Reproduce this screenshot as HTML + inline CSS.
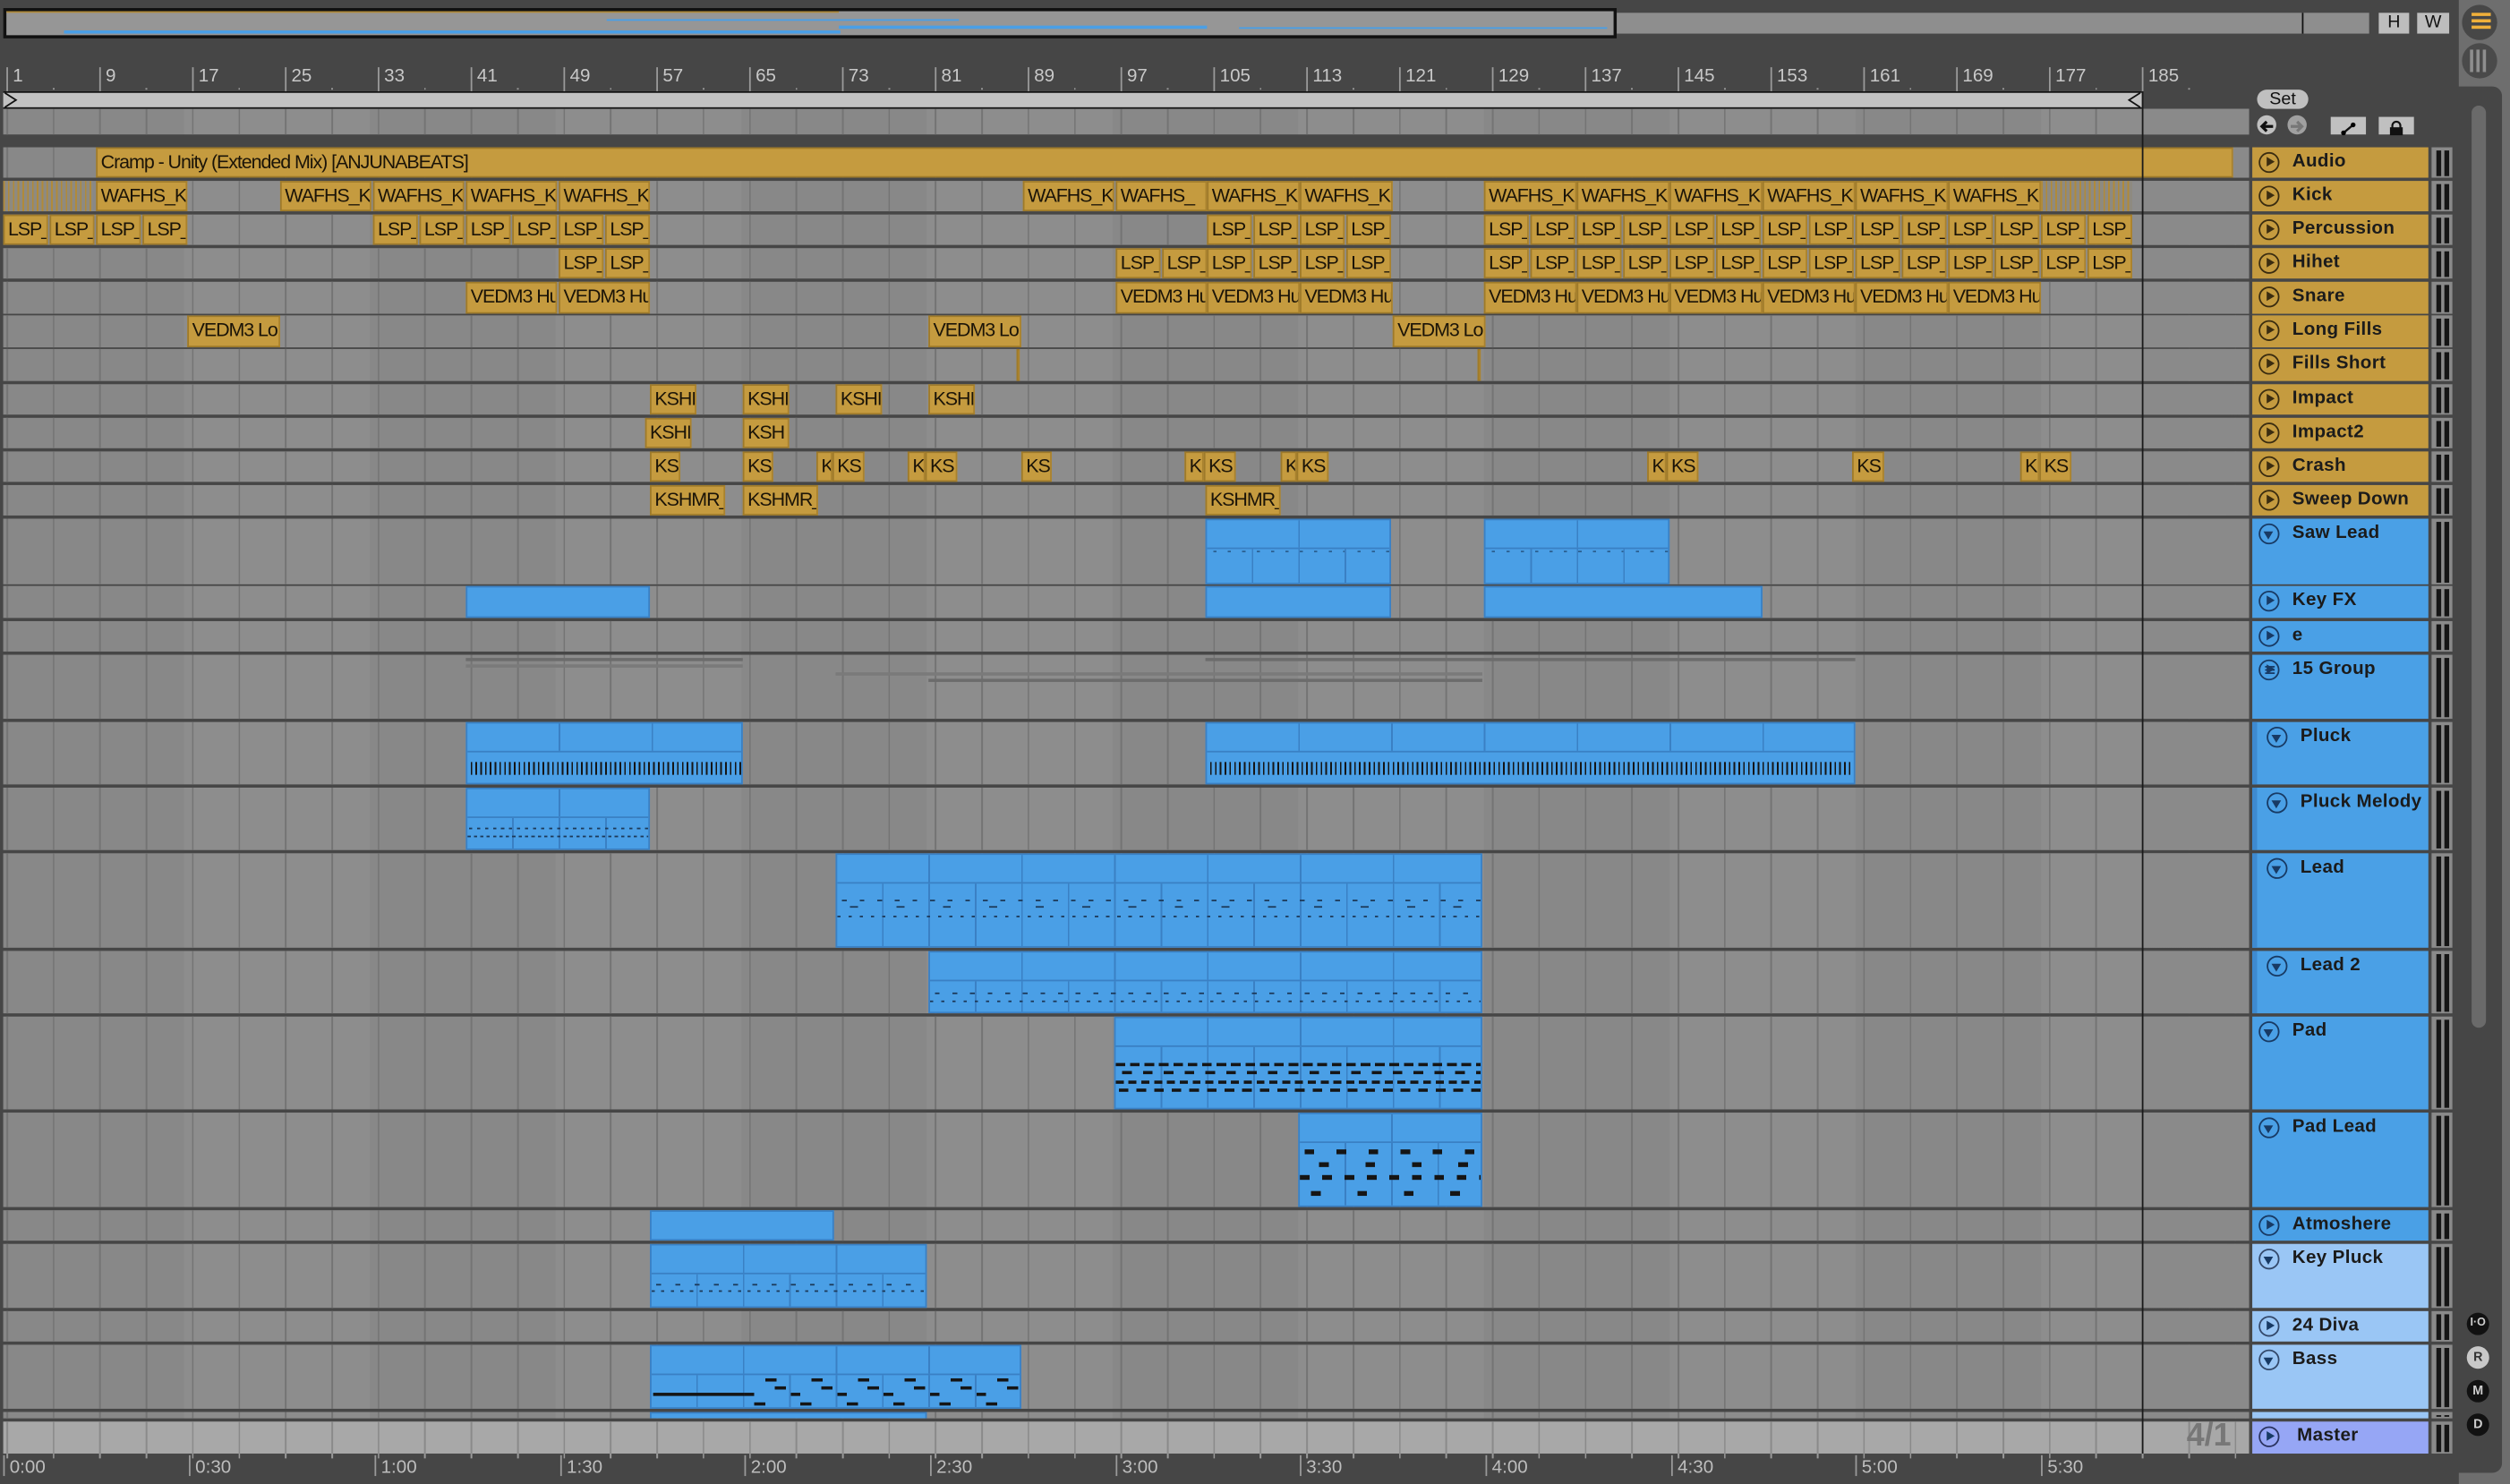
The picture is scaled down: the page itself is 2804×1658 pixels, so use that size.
<!DOCTYPE html>
<html><head><meta charset="utf-8">
<style>
*{margin:0;padding:0;box-sizing:border-box}
html,body{width:2804px;height:1658px;overflow:hidden;background:#464646}
#s{position:absolute;left:0;top:0;width:1568px;height:927px;transform:scale(1.78827,1.78857);transform-origin:0 0;font-family:"Liberation Sans",sans-serif;background:#464646}
.a{position:absolute}
.row{position:absolute;left:2px;width:1403px;background:
 linear-gradient(90deg,transparent 0 1336px,#8a8a8a 1336px),
 repeating-linear-gradient(90deg,#747474 0 1px,transparent 1px 29px),
 repeating-linear-gradient(90deg,#888 0 116px,#8d8d8d 116px 232px);
 background-position:0 0,2px 0,-3px 0;overflow:hidden}
.g{position:absolute;top:0;bottom:0;background:#c59b3f;border:1px solid #9e7a2a;border-right-color:#a9822e;color:#1b1408;font-family:"Liberation Sans Narrow","Liberation Sans",sans-serif;font-size:12px;line-height:17px;padding-left:2px;white-space:nowrap;overflow:hidden;letter-spacing:-.6px}
.h{position:absolute;top:0;bottom:0;background:repeating-linear-gradient(90deg,#b08a3a 0 1px,#8e8a80 1px 3px)}
.b{position:absolute;top:0;bottom:0;background:#4a9fe6;border:1px solid #3a80c4;overflow:hidden}
.b .hd{position:absolute;left:0;right:0;top:0;border-bottom:1px solid #3a80c4;background:repeating-linear-gradient(90deg,transparent 0 57px,#3a80c4 57px 58px)}
.b .bd{position:absolute;left:0;right:0;bottom:0;background:repeating-linear-gradient(90deg,transparent 0 28px,#3a80c4 28px 29px)}
.th{position:absolute;left:1407px;width:110px;font-weight:bold;font-size:11.5px;color:#1b1b1b;overflow:hidden}
.th .ic{position:absolute;left:4px;top:3px;width:13px;height:13px;border:1.3px solid #3a2c10;border-radius:50%}
.th .ic:after{content:"";position:absolute;left:3.6px;top:2.2px;border-left:5px solid #3a2c10;border-top:3.3px solid transparent;border-bottom:3.3px solid transparent}
.th.bl .ic{border-color:#183a64}.th.bl .ic:after{border-left-color:#183a64}
.th .ic.d:after{left:2.2px;top:3.8px;border-top:5px solid #183a64;border-left:3.3px solid transparent;border-right:3.3px solid transparent;border-bottom:0}
.th span{position:absolute;left:25px;top:3px;white-space:nowrap;letter-spacing:.2px}
.th.in .ic{left:9px}.th.in span{left:30px}
.th.in{box-shadow:inset 3px 0 0 #3e8ad0}
.gd{background:#c59b3f}.bl{background:#4aa0e6}.lb{background:#9ac6f5}
.m{position:absolute;left:1519px;width:13px;background:#8a8a8a}
.m:before,.m:after{content:"";position:absolute;top:2px;bottom:1px;width:3.5px;background:#151515}
.m:before{left:2.5px}.m:after{left:7.5px}
.rn{position:absolute;top:42px;font-size:11.5px;color:#c8c8c8;border-left:1px solid #9a9a9a;padding-left:3px;height:15px;line-height:12px}
.tl{position:absolute;top:909px;font-size:11.5px;color:#bdbdbd;border-left:1px solid #9a9a9a;padding-left:3px;height:13px;line-height:16px}
</style></head><body><div id="s">

<!-- overview -->
<div class="a" style="left:2px;top:5px;width:1008px;height:19px;border:2px solid #111;background:#969696">
 <div class="a" style="left:0;top:0;width:520px;height:1px;background:#b08a3a"></div>
 <div class="a" style="left:36px;top:12px;width:485px;height:2px;background:#4a9fe6"></div>
 <div class="a" style="left:375px;top:5px;width:220px;height:1px;background:#4a9fe6"></div>
 <div class="a" style="left:520px;top:9px;width:230px;height:2px;background:#4a9fe6"></div>
 <div class="a" style="left:770px;top:10px;width:230px;height:1px;background:#4a9fe6"></div>
</div>
<div class="a" style="left:1010px;top:8px;width:470px;height:13px;background:#8e8e8e"></div>
<div class="a" style="left:1438px;top:8px;width:1px;height:13px;background:#111"></div>
<div class="a" style="left:1486px;top:8px;width:19px;height:13px;background:#bdbdbd;font-size:11px;text-align:center;line-height:13px;color:#111">H</div>
<div class="a" style="left:1510px;top:8px;width:20px;height:13px;background:#bdbdbd;font-size:11px;text-align:center;line-height:13px;color:#111">W</div>

<!-- right strip -->
<div class="a" style="left:1536px;top:0;width:32px;height:927px;background:#6e6e6e"></div>
<div class="a" style="left:1538px;top:3px;width:22px;height:22px;border-radius:50%;background:#474747"></div>
<div class="a" style="left:1544px;top:8px;width:12px;height:2px;background:#f0b03a;box-shadow:0 4px 0 #f0b03a,0 8px 0 #f0b03a"></div>
<div class="a" style="left:1538px;top:27px;width:22px;height:22px;border-radius:50%;background:#4a4a4a"></div>
<div class="a" style="left:1543px;top:31px;width:2px;height:14px;background:#8e8e8e;box-shadow:4px 0 0 #8e8e8e,8px 0 0 #8e8e8e"></div>
<div class="a" style="left:1530px;top:54px;width:33px;height:866px;background:#464646;border-radius:0 6px 6px 0"></div>
<div class="a" style="left:1544px;top:66px;width:9px;height:576px;background:#6a6a6a;border-radius:5px"></div>
<div class="a" style="left:1541px;top:820px;width:14px;height:14px;border-radius:50%;background:#111;color:#ccc;font-size:7px;font-weight:bold;text-align:center;line-height:14px">I·O</div>
<div class="a" style="left:1541px;top:841px;width:14px;height:14px;border-radius:50%;background:#c8c8c8;color:#333;font-size:8px;font-weight:bold;text-align:center;line-height:14px">R</div>
<div class="a" style="left:1541px;top:862px;width:14px;height:14px;border-radius:50%;background:#111;color:#ccc;font-size:8px;font-weight:bold;text-align:center;line-height:14px">M</div>
<div class="a" style="left:1541px;top:883px;width:14px;height:14px;border-radius:50%;background:#111;color:#ccc;font-size:8px;font-weight:bold;text-align:center;line-height:14px">D</div>

<!-- ruler -->
<div class="rn" style="left:4px">1</div><div class="rn" style="left:62px">9</div><div class="rn" style="left:120px">17</div><div class="rn" style="left:178px">25</div><div class="rn" style="left:236px">33</div><div class="rn" style="left:294px">41</div><div class="rn" style="left:352px">49</div><div class="rn" style="left:410px">57</div><div class="rn" style="left:468px">65</div><div class="rn" style="left:526px">73</div><div class="rn" style="left:584px">81</div><div class="rn" style="left:642px">89</div><div class="rn" style="left:700px">97</div><div class="rn" style="left:758px">105</div><div class="rn" style="left:816px">113</div><div class="rn" style="left:874px">121</div><div class="rn" style="left:932px">129</div><div class="rn" style="left:990px">137</div><div class="rn" style="left:1048px">145</div><div class="rn" style="left:1106px">153</div><div class="rn" style="left:1164px">161</div><div class="rn" style="left:1222px">169</div><div class="rn" style="left:1280px">177</div><div class="rn" style="left:1338px">185</div>
<div class="a" style="left:33px;top:55px;width:1340px;height:1px;background:repeating-linear-gradient(90deg,#9a9a9a 0 1px,transparent 1px 58px)"></div>

<!-- loop bar -->
<div class="a" style="left:2px;top:57px;width:1336px;height:11px;background:#c2c2c2;border-top:1px solid #111;border-bottom:1px solid #111"></div>
<svg class="a" style="left:2px;top:57px" width="10" height="11"><path d="M1 1 L8 5.5 L1 10" fill="none" stroke="#111" stroke-width="1"/></svg>
<svg class="a" style="left:1328px;top:57px" width="10" height="11"><path d="M9 1 L2 5.5 L9 10" fill="none" stroke="#111" stroke-width="1"/></svg>
<div class="row" style="top:68px;height:16px"></div>

<!-- tracks -->
<div class="row" style="top:92px;height:19px"><div class="g" style="left:58px;width:1335px">Cramp - Unity (Extended Mix) [ANJUNABEATS]</div></div>
<div class="row" style="top:113px;height:19px">
<div class="h" style="left:0;width:56px"></div>
<div class="g" style="left:58px;width:57px">WAFHS_K</div><div class="g" style="left:173px;width:57px">WAFHS_K</div><div class="g" style="left:231px;width:57px">WAFHS_K</div><div class="g" style="left:289px;width:57px">WAFHS_K</div><div class="g" style="left:347px;width:57px">WAFHS_K</div><div class="g" style="left:637px;width:57px">WAFHS_K</div><div class="g" style="left:695px;width:57px">WAFHS_</div><div class="g" style="left:752px;width:58px">WAFHS_K</div><div class="g" style="left:810px;width:58px">WAFHS_K</div><div class="g" style="left:925px;width:58px">WAFHS_K</div><div class="g" style="left:983px;width:58px">WAFHS_K</div><div class="g" style="left:1041px;width:58px">WAFHS_K</div><div class="g" style="left:1099px;width:58px">WAFHS_K</div><div class="g" style="left:1157px;width:58px">WAFHS_K</div><div class="g" style="left:1215px;width:58px">WAFHS_K</div>
<div class="h" style="left:1273px;width:57px"></div></div>
<div class="row" style="top:134px;height:19px">
<div class="g" style="left:0;width:28px">LSP_</div><div class="g" style="left:29px;width:28px">LSP_</div><div class="g" style="left:58px;width:28px">LSP_</div><div class="g" style="left:87px;width:28px">LSP_</div>
<div class="g" style="left:231px;width:28px">LSP_</div><div class="g" style="left:260px;width:28px">LSP_</div><div class="g" style="left:289px;width:28px">LSP_</div><div class="g" style="left:318px;width:28px">LSP_</div><div class="g" style="left:347px;width:28px">LSP_</div><div class="g" style="left:376px;width:28px">LSP_</div>
<div class="g" style="left:752px;width:28px">LSP_</div><div class="g" style="left:781px;width:28px">LSP_</div><div class="g" style="left:810px;width:28px">LSP_</div><div class="g" style="left:839px;width:28px">LSP_</div>
<div class="g" style="left:925px;width:28px">LSP_</div><div class="g" style="left:954px;width:28px">LSP_</div><div class="g" style="left:983px;width:28px">LSP_</div><div class="g" style="left:1012px;width:28px">LSP_</div><div class="g" style="left:1041px;width:28px">LSP_</div><div class="g" style="left:1070px;width:28px">LSP_</div><div class="g" style="left:1099px;width:28px">LSP_</div><div class="g" style="left:1128px;width:28px">LSP_</div><div class="g" style="left:1157px;width:28px">LSP_</div><div class="g" style="left:1186px;width:28px">LSP_</div><div class="g" style="left:1215px;width:28px">LSP_</div><div class="g" style="left:1244px;width:28px">LSP_</div><div class="g" style="left:1273px;width:28px">LSP_</div><div class="g" style="left:1302px;width:28px">LSP_</div></div>
<div class="row" style="top:155px;height:19px">
<div class="g" style="left:347px;width:28px">LSP_</div><div class="g" style="left:376px;width:28px">LSP_</div>
<div class="g" style="left:695px;width:28px">LSP_</div><div class="g" style="left:724px;width:28px">LSP_</div><div class="g" style="left:752px;width:28px">LSP_</div><div class="g" style="left:781px;width:28px">LSP_</div><div class="g" style="left:810px;width:28px">LSP_</div><div class="g" style="left:839px;width:28px">LSP_</div>
<div class="g" style="left:925px;width:28px">LSP_</div><div class="g" style="left:954px;width:28px">LSP_</div><div class="g" style="left:983px;width:28px">LSP_</div><div class="g" style="left:1012px;width:28px">LSP_</div><div class="g" style="left:1041px;width:28px">LSP_</div><div class="g" style="left:1070px;width:28px">LSP_</div><div class="g" style="left:1099px;width:28px">LSP_</div><div class="g" style="left:1128px;width:28px">LSP_</div><div class="g" style="left:1157px;width:28px">LSP_</div><div class="g" style="left:1186px;width:28px">LSP_</div><div class="g" style="left:1215px;width:28px">LSP_</div><div class="g" style="left:1244px;width:28px">LSP_</div><div class="g" style="left:1273px;width:28px">LSP_</div><div class="g" style="left:1302px;width:28px">LSP_</div></div>
<div class="row" style="top:176px;height:20px">
<div class="g" style="left:289px;width:57px">VEDM3 Hu</div><div class="g" style="left:347px;width:57px">VEDM3 Hu</div><div class="g" style="left:695px;width:57px">VEDM3 Hu</div><div class="g" style="left:752px;width:58px">VEDM3 Hu</div><div class="g" style="left:810px;width:58px">VEDM3 Hu</div><div class="g" style="left:925px;width:58px">VEDM3 Hu</div><div class="g" style="left:983px;width:58px">VEDM3 Hu</div><div class="g" style="left:1041px;width:58px">VEDM3 Hu</div><div class="g" style="left:1099px;width:58px">VEDM3 Hu</div><div class="g" style="left:1157px;width:58px">VEDM3 Hu</div><div class="g" style="left:1215px;width:58px">VEDM3 Hu</div></div>
<div class="row" style="top:197px;height:20px">
<div class="g" style="left:115px;width:58px">VEDM3 Lo</div><div class="g" style="left:578px;width:58px">VEDM3 Lo</div><div class="g" style="left:868px;width:58px">VEDM3 Lo</div></div>
<div class="row" style="top:218px;height:20px"><div class="g" style="left:633px;width:2px;padding:0"></div><div class="g" style="left:921px;width:2px;padding:0"></div></div>
<div class="row" style="top:240px;height:19px">
<div class="g" style="left:404px;width:29px">KSHI</div><div class="g" style="left:462px;width:29px">KSHI</div><div class="g" style="left:520px;width:29px">KSHI</div><div class="g" style="left:578px;width:29px">KSHI</div></div>
<div class="row" style="top:261px;height:19px">
<div class="g" style="left:401px;width:29px">KSHI</div><div class="g" style="left:462px;width:29px">KSH</div></div>
<div class="row" style="top:282px;height:19px">
<div class="g" style="left:404px;width:19px">KS</div><div class="g" style="left:462px;width:19px">KS</div><div class="g" style="left:508px;width:10px">K</div><div class="g" style="left:518px;width:20px">KS</div><div class="g" style="left:565px;width:11px">K</div><div class="g" style="left:576px;width:20px">KS</div><div class="g" style="left:636px;width:19px">KS</div><div class="g" style="left:738px;width:12px">K</div><div class="g" style="left:750px;width:20px">KS</div><div class="g" style="left:798px;width:10px">K</div><div class="g" style="left:808px;width:20px">KS</div><div class="g" style="left:1027px;width:12px">K</div><div class="g" style="left:1039px;width:20px">KS</div><div class="g" style="left:1155px;width:20px">KS</div><div class="g" style="left:1260px;width:12px">K</div><div class="g" style="left:1272px;width:20px">KS</div></div>
<div class="row" style="top:303px;height:19px">
<div class="g" style="left:404px;width:47px">KSHMR_</div><div class="g" style="left:462px;width:47px">KSHMR_</div><div class="g" style="left:751px;width:47px">KSHMR_</div></div>

<!-- Saw Lead -->
<div class="row" style="top:324px;height:41px">
<div class="b" style="left:751px;width:116px"><div class="hd" style="height:18px"></div><div class="bd" style="top:18px;background:repeating-linear-gradient(90deg,transparent 0 28px,#3a80c4 28px 29px),repeating-linear-gradient(90deg,transparent 0 4px,#2b5f90 4px 6px,transparent 6px 9px) 0 1px/100% 1px no-repeat"></div></div>
<div class="b" style="left:925px;width:116px"><div class="hd" style="height:18px"></div><div class="bd" style="top:18px;background:repeating-linear-gradient(90deg,transparent 0 28px,#3a80c4 28px 29px),repeating-linear-gradient(90deg,transparent 0 4px,#2b5f90 4px 6px,transparent 6px 9px) 0 1px/100% 1px no-repeat"></div></div></div>
<div class="row" style="top:366px;height:20px">
<div class="b" style="left:289px;width:115px"></div><div class="b" style="left:751px;width:116px"></div><div class="b" style="left:925px;width:174px"></div></div>
<div class="row" style="top:388px;height:19px"></div>
<div class="row" style="top:409px;height:40px">
<div class="a" style="left:289px;top:2px;width:173px;height:2px;background:#6c6c6c"></div><div class="a" style="left:289px;top:6px;width:173px;height:2px;background:#7a7a7a"></div>
<div class="a" style="left:751px;top:2px;width:406px;height:2px;background:#6c6c6c"></div>
<div class="a" style="left:520px;top:11px;width:404px;height:2px;background:#7a7a7a"></div><div class="a" style="left:578px;top:15px;width:346px;height:2px;background:#6c6c6c"></div></div>
<div class="row" style="top:451px;height:39px">
<div class="b" style="left:289px;width:173px"><div class="hd" style="height:18px"></div><div class="bd" style="top:18px;background:repeating-linear-gradient(90deg,#151515 0 1px,transparent 1px 3px) 2px 6px/100% 8px no-repeat"></div></div>
<div class="b" style="left:751px;width:406px"><div class="hd" style="height:18px"></div><div class="bd" style="top:18px;background:repeating-linear-gradient(90deg,#151515 0 1px,transparent 1px 3px) 2px 6px/100% 8px no-repeat"></div></div></div>
<div class="row" style="top:492px;height:39px">
<div class="b" style="left:289px;width:115px"><div class="hd" style="height:18px"></div><div class="bd" style="top:18px;background:repeating-linear-gradient(90deg,transparent 0 1px,#1d3a5a 1px 3px,transparent 3px 5px) 0 6px/100% 1px no-repeat,repeating-linear-gradient(90deg,#1d3a5a 0 2px,transparent 2px 4px) 0 11px/100% 1px no-repeat,repeating-linear-gradient(90deg,transparent 0 28px,#3a80c4 28px 29px)"></div></div></div>
<!-- Lead -->
<div class="row" style="top:533px;height:59px">
<div class="b" style="left:520px;width:404px"><div class="hd" style="height:18px"></div><div class="bd" style="top:18px;background:repeating-linear-gradient(90deg,transparent 0 3px,#1d3a5a 3px 6px,transparent 6px 11px) 0 10px/100% 1px no-repeat,repeating-linear-gradient(90deg,transparent 0 8px,#1d3a5a 8px 13px,transparent 13px 29px) 0 14px/100% 1px no-repeat,repeating-linear-gradient(90deg,#1d3a5a 0 2px,transparent 2px 7px) 0 20px/100% 1px no-repeat,repeating-linear-gradient(90deg,transparent 0 28px,#3a80c4 28px 29px)"></div></div></div>
<div class="row" style="top:594px;height:39px">
<div class="b" style="left:578px;width:346px"><div class="hd" style="height:18px"></div><div class="bd" style="top:18px;background:repeating-linear-gradient(90deg,transparent 0 3px,#1d3a5a 3px 6px,transparent 6px 11px) 0 7px/100% 1px no-repeat,repeating-linear-gradient(90deg,#1d3a5a 0 2px,transparent 2px 7px) 0 12px/100% 1px no-repeat,repeating-linear-gradient(90deg,transparent 0 28px,#3a80c4 28px 29px)"></div></div></div>
<div class="row" style="top:635px;height:58px">
<div class="b" style="left:694px;width:230px"><div class="hd" style="height:18px"></div><div class="bd" style="top:18px;background:repeating-linear-gradient(90deg,#151515 0 6px,transparent 6px 9px) 0 10px/100% 2px no-repeat,repeating-linear-gradient(90deg,transparent 0 4px,#151515 4px 10px,transparent 10px 13px) 0 15px/100% 2px no-repeat,repeating-linear-gradient(90deg,#151515 0 5px,transparent 5px 8px) 0 21px/100% 2px no-repeat,repeating-linear-gradient(90deg,transparent 0 2px,#151515 2px 8px,transparent 8px 11px) 0 26px/100% 2px no-repeat,repeating-linear-gradient(90deg,transparent 0 28px,#3a80c4 28px 29px)"></div></div></div>
<div class="row" style="top:695px;height:59px">
<div class="b" style="left:809px;width:115px"><div class="hd" style="height:18px"></div><div class="bd" style="top:18px;background:repeating-linear-gradient(90deg,transparent 0 3px,#151515 3px 9px,transparent 9px 20px) 0 4px/100% 3px no-repeat,repeating-linear-gradient(90deg,transparent 0 12px,#151515 12px 18px,transparent 18px 29px) 0 12px/100% 3px no-repeat,repeating-linear-gradient(90deg,#151515 0 6px,transparent 6px 14px) 0 20px/100% 3px no-repeat,repeating-linear-gradient(90deg,transparent 0 7px,#151515 7px 13px,transparent 13px 29px) 0 30px/100% 3px no-repeat,repeating-linear-gradient(90deg,transparent 0 28px,#3a80c4 28px 29px)"></div></div></div>
<div class="row" style="top:756px;height:19px"><div class="b" style="left:404px;width:115px"></div></div>
<div class="row" style="top:777px;height:40px">
<div class="b" style="left:404px;width:173px"><div class="hd" style="height:18px"></div><div class="bd" style="top:18px;background:repeating-linear-gradient(90deg,transparent 0 3px,#1d3a5a 3px 6px,transparent 6px 12px) 0 6px/100% 1px no-repeat,repeating-linear-gradient(90deg,#1d3a5a 0 2px,transparent 2px 6px) 0 10px/100% 1px no-repeat,repeating-linear-gradient(90deg,transparent 0 28px,#3a80c4 28px 29px)"></div></div></div>
<div class="row" style="top:819px;height:19px"></div>
<div class="row" style="top:840px;height:40px">
<div class="b" style="left:404px;width:232px"><div class="hd" style="height:18px"></div><div class="bd" style="top:18px;background:linear-gradient(#151515,#151515) 1px 11px/57px 2px no-repeat,repeating-linear-gradient(90deg,transparent 0 13px,#151515 13px 20px,transparent 20px 29px) 58px 2px/100% 2px no-repeat,repeating-linear-gradient(90deg,transparent 0 19px,#151515 19px 26px,transparent 26px 29px) 58px 7px/100% 2px no-repeat,repeating-linear-gradient(90deg,#151515 0 6px,transparent 6px 29px) 58px 11px/100% 2px no-repeat,repeating-linear-gradient(90deg,transparent 0 6px,#151515 6px 13px,transparent 13px 29px) 58px 17px/100% 2px no-repeat,repeating-linear-gradient(90deg,transparent 0 28px,#3a80c4 28px 29px)"></div></div></div>
<div class="row" style="top:882px;height:4px"><div class="b" style="left:404px;width:173px;border-bottom:0"></div></div>
<!-- master row arrangement -->
<div class="row" style="top:888px;height:20px;background:repeating-linear-gradient(90deg,#8a8a8a 0 1px,transparent 1px 29px),#a8a8a8;background-position:2px 0,0 0"></div>
<div class="a" style="left:1366px;top:886px;font-size:20px;font-weight:bold;color:#777">4/1</div>

<!-- end line -->
<div class="a" style="left:1338px;top:57px;width:1px;height:851px;background:#1a1a1a"></div>

<!-- bottom timeline -->
<div class="a" style="left:2px;top:908px;width:1403px;height:3px;background:repeating-linear-gradient(90deg,#9a9a9a 0 1px,transparent 1px 29px);background-position:2px 0"></div>
<div class="tl" style="left:2px">0:00</div><div class="tl" style="left:118px">0:30</div><div class="tl" style="left:234px">1:00</div><div class="tl" style="left:350px">1:30</div><div class="tl" style="left:465px">2:00</div><div class="tl" style="left:581px">2:30</div><div class="tl" style="left:697px">3:00</div><div class="tl" style="left:812px">3:30</div><div class="tl" style="left:928px">4:00</div><div class="tl" style="left:1044px">4:30</div><div class="tl" style="left:1159px">5:00</div><div class="tl" style="left:1275px">5:30</div>

<!-- header controls -->
<div class="a" style="left:1410px;top:56px;width:32px;height:12px;border-radius:6px;background:#c0c0c0;font-size:11px;text-align:center;line-height:12px;color:#111">Set</div>
<div class="a" style="left:1410px;top:72px;width:12px;height:12px;border-radius:50%;background:#c0c0c0"><svg width="12" height="12"><path d="M3 6 H10 M6 3 L3 6 L6 9" fill="none" stroke="#111" stroke-width="1.8"/></svg></div>
<div class="a" style="left:1429px;top:72px;width:12px;height:12px;border-radius:50%;background:#a0a0a0"><svg width="12" height="12"><path d="M2 6 H9 M6 3 L9 6 L6 9" fill="none" stroke="#777" stroke-width="1.8"/></svg></div>
<div class="a" style="left:1456px;top:73px;width:22px;height:11px;background:#c0c0c0"><svg width="22" height="11"><path d="M8 8 L14 3" stroke="#111" stroke-width="1.3"/><circle cx="8" cy="8" r="1.5"/><circle cx="14" cy="3" r="1.5"/></svg></div>
<div class="a" style="left:1486px;top:73px;width:22px;height:11px;background:#c0c0c0"><svg width="22" height="11"><rect x="7" y="4.5" width="8" height="5" fill="#111"/><path d="M8.5 5 V3.5 A2.5 2.5 0 0 1 13.5 3.5 V5" fill="none" stroke="#111" stroke-width="1.2"/></svg></div>

<!-- track headers -->
<div class="th gd" style="top:92px;height:19px"><div class="ic"></div><span>Audio</span></div><div class="m" style="top:92px;height:19px"></div>
<div class="th gd" style="top:113px;height:19px"><div class="ic"></div><span>Kick</span></div><div class="m" style="top:113px;height:19px"></div>
<div class="th gd" style="top:134px;height:19px"><div class="ic"></div><span>Percussion</span></div><div class="m" style="top:134px;height:19px"></div>
<div class="th gd" style="top:155px;height:19px"><div class="ic"></div><span>Hihet</span></div><div class="m" style="top:155px;height:19px"></div>
<div class="th gd" style="top:176px;height:20px"><div class="ic"></div><span>Snare</span></div><div class="m" style="top:176px;height:20px"></div>
<div class="th gd" style="top:197px;height:20px"><div class="ic"></div><span>Long Fills</span></div><div class="m" style="top:197px;height:20px"></div>
<div class="th gd" style="top:218px;height:20px"><div class="ic"></div><span>Fills Short</span></div><div class="m" style="top:218px;height:20px"></div>
<div class="th gd" style="top:240px;height:19px"><div class="ic"></div><span>Impact</span></div><div class="m" style="top:240px;height:19px"></div>
<div class="th gd" style="top:261px;height:19px"><div class="ic"></div><span>Impact2</span></div><div class="m" style="top:261px;height:19px"></div>
<div class="th gd" style="top:282px;height:19px"><div class="ic"></div><span>Crash</span></div><div class="m" style="top:282px;height:19px"></div>
<div class="th gd" style="top:303px;height:19px"><div class="ic"></div><span>Sweep Down</span></div><div class="m" style="top:303px;height:19px"></div>
<div class="th bl" style="top:324px;height:41px"><div class="ic d"></div><span>Saw Lead</span></div><div class="m" style="top:324px;height:41px"></div>
<div class="th bl" style="top:366px;height:20px"><div class="ic"></div><span>Key FX</span></div><div class="m" style="top:366px;height:20px"></div>
<div class="th bl" style="top:388px;height:19px"><div class="ic"></div><span>e</span></div><div class="m" style="top:388px;height:19px"></div>
<div class="th bl" style="top:409px;height:40px"><div class="ic" style="border-color:#183a64"></div><div class="a" style="left:8px;top:7px;width:6px;height:1px;background:#183a64;box-shadow:0 2px 0 #183a64,0 4px 0 #183a64"></div><span>15 Group</span></div><div class="m" style="top:409px;height:40px"></div>
<div class="th bl in" style="top:451px;height:39px"><div class="ic d"></div><span>Pluck</span></div><div class="m" style="top:451px;height:39px"></div>
<div class="th bl in" style="top:492px;height:39px"><div class="ic d"></div><span>Pluck Melody</span></div><div class="m" style="top:492px;height:39px"></div>
<div class="th bl in" style="top:533px;height:59px"><div class="ic d"></div><span>Lead</span></div><div class="m" style="top:533px;height:59px"></div>
<div class="th bl in" style="top:594px;height:39px"><div class="ic d"></div><span>Lead 2</span></div><div class="m" style="top:594px;height:39px"></div>
<div class="th bl" style="top:635px;height:58px"><div class="ic d"></div><span>Pad</span></div><div class="m" style="top:635px;height:58px"></div>
<div class="th bl" style="top:695px;height:59px"><div class="ic d"></div><span>Pad Lead</span></div><div class="m" style="top:695px;height:59px"></div>
<div class="th bl" style="top:756px;height:19px"><div class="ic"></div><span>Atmoshere</span></div><div class="m" style="top:756px;height:19px"></div>
<div class="th bl lb" style="top:777px;height:40px"><div class="ic d" style="border-color:#33486a"></div><span>Key Pluck</span></div><div class="m" style="top:777px;height:40px"></div>
<div class="th bl lb" style="top:819px;height:19px"><div class="ic" style="border-color:#33486a"></div><span>24 Diva</span></div><div class="m" style="top:819px;height:19px"></div>
<div class="th bl lb" style="top:840px;height:40px"><div class="ic d" style="border-color:#33486a"></div><span>Bass</span></div><div class="m" style="top:840px;height:40px"></div>
<div class="th lb" style="top:882px;height:4px"></div><div class="m" style="top:882px;height:4px"></div>
<div class="th bl" style="top:888px;height:20px;background:#96a6f5"><div class="ic" style="border-color:#2a3360"></div><span style="left:28px">Master</span></div><div class="m" style="top:888px;height:20px"></div>

</div></body></html>
